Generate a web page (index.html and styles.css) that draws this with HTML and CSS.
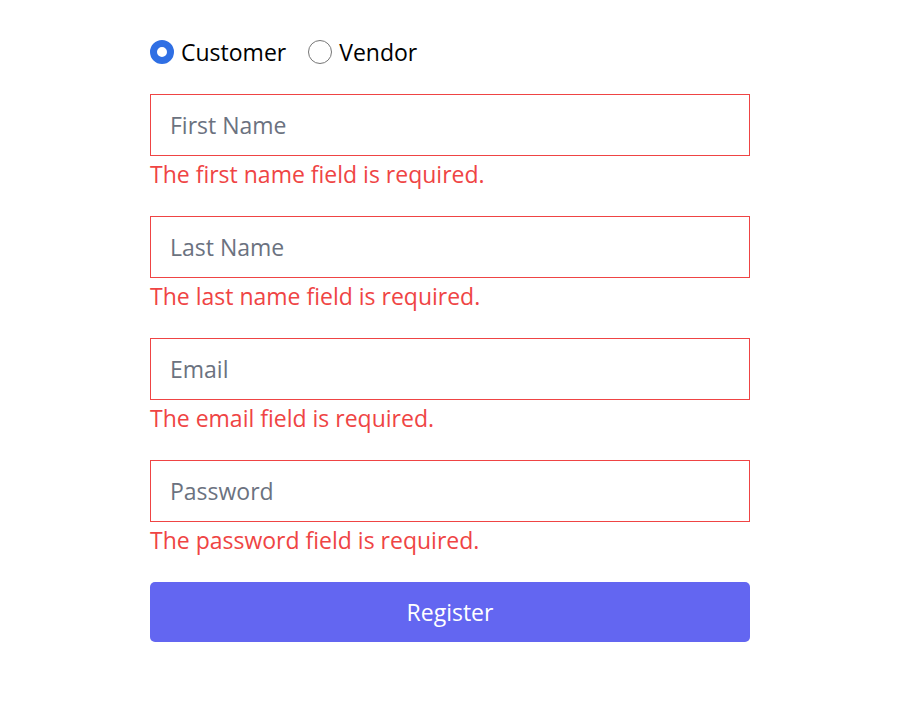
FILE: index.html
```html
<!DOCTYPE html>
<html lang="en">
<head>
<meta charset="utf-8">
<title>Register</title>
<link rel="stylesheet" href="styles.css">
</head>
<body>
<form class="form">
  <div class="roles">
    <label class="role"><input type="radio" name="role" class="radio" checked><span>Customer</span></label>
    <label class="role"><input type="radio" name="role" class="radio"><span>Vendor</span></label>
  </div>
  <div class="field">
    <input class="input" type="text" placeholder="First Name">
    <p class="error">The first name field is required.</p>
  </div>
  <div class="field">
    <input class="input" type="text" placeholder="Last Name">
    <p class="error">The last name field is required.</p>
  </div>
  <div class="field">
    <input class="input" type="email" placeholder="Email">
    <p class="error">The email field is required.</p>
  </div>
  <div class="field">
    <input class="input" type="password" placeholder="Password">
    <p class="error">The password field is required.</p>
  </div>
  <button class="button" type="button">Register</button>
</form>
</body>
</html>
```
FILE: styles.css
```css
* { box-sizing: border-box; }
body {
  margin: 0;
  background: #fff;
  font-family: "Open Sans", "Noto Sans", sans-serif;
  font-size: 23px;
  color: #000;
}
.form {
  width: 600px;
  margin: 34px 0 0 150px;
  display: flex;
  flex-direction: column;
  gap: 24px;
}
.roles {
  display: flex;
  align-items: center;
  gap: 22px;
  height: 36px;
}
.role {
  display: flex;
  align-items: center;
  gap: 7px;
  line-height: 36px;
}
.radio {
  appearance: none;
  -webkit-appearance: none;
  margin: 0;
  width: 24px;
  height: 24px;
  border-radius: 50%;
  border: 1.5px solid #767676;
  background: #fff;
}
.radio:checked {
  border: 7.5px solid #2f6fe4;
  background: #fff;
}
.field {
  display: flex;
  flex-direction: column;
}
.input {
  height: 62px;
  width: 100%;
  border: 1px solid #ef4444;
  border-radius: 0;
  padding: 0 19px;
  font: inherit;
  color: #000;
  outline: none;
}
.input::placeholder { color: #6b7280; }
.error {
  margin: 0;
  line-height: 36px;
  color: #ef4444;
}
.button {
  height: 60px;
  border: 0;
  border-radius: 5px;
  background: #6366f1;
  color: #fff;
  font: inherit;
}
```
